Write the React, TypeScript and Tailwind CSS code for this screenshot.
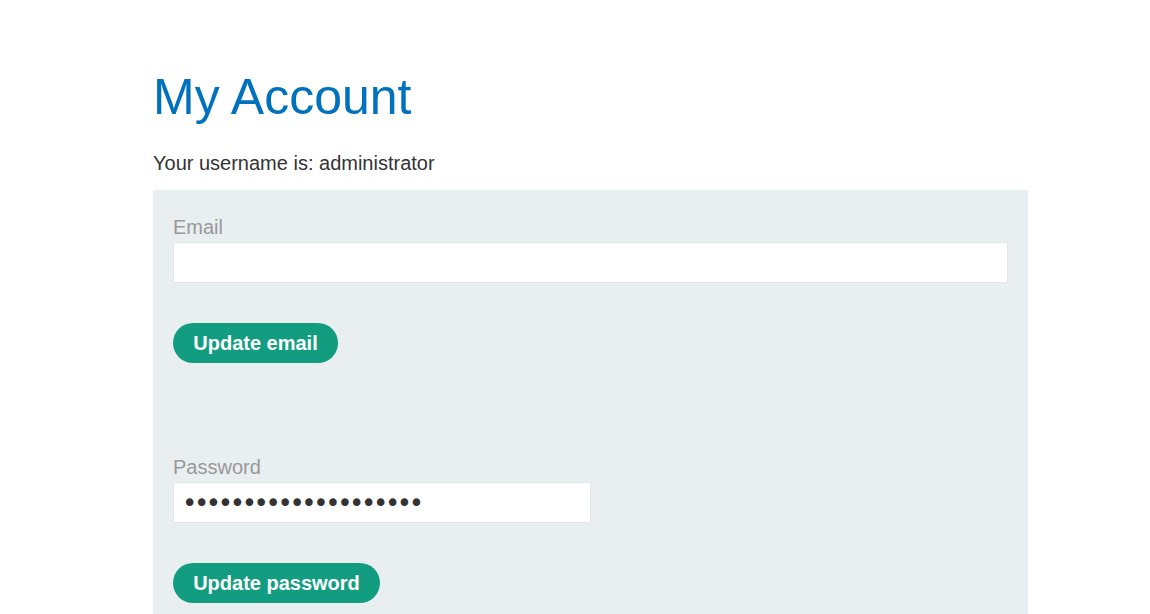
import React from 'react';

const font = { fontFamily: '"Liberation Sans", Arial, sans-serif' };

const AccountField: React.FC<{ label: string; type: string; value?: string; width: string; button: string; btnWidth: string; top: string; inputFont?: string }> = ({
    label, type, value, width, button, btnWidth, top, inputFont = 'px-[11px] text-[20px]',
}) => (
    <div className={`flex flex-col ${top}`}>
        <label className="block h-6 leading-6 text-[20px] text-[#999999] mb-[3px]">{label}</label>
        <input
            type={type}
            defaultValue={value}
            readOnly
            className={`${width} h-[41px] bg-white border border-[#e4e6e8] text-[#333333] outline-none ${inputFont}`}
        />
        <button className={`mt-10 h-10 ${btnWidth} rounded-full bg-[#139d80] text-white text-[20px] font-bold leading-10`}>
            {button}
        </button>
    </div>
);

export default function App() {
    return (
        <div className="min-h-[614px] bg-white overflow-hidden" style={font}>
            <div className="ml-[153px] w-[875px] pt-[67px]">
                <h1 className="text-[50px] leading-[60px] text-[#0071bc] font-normal">My Account</h1>
                <p className="mt-[24px] text-[20px] leading-6 text-[#333333]">Your username is: administrator</p>
                <div className="mt-[15px] bg-[#e9eef1] px-5 pt-[25px] pb-10">
                    <AccountField label="Email" type="email" width="w-full" button="Update email" btnWidth="w-[165px]" top="" />
                    <AccountField
                        label="Password"
                        type="password"
                        value="peter123peter123pete"
                        width="w-[418px]"
                        button="Update password"
                        btnWidth="w-[207px]"
                        top="mt-[92px]"
                        inputFont="pl-[8px] pr-2 font-['DejaVu_Sans'] text-[26px] tracking-[-3.4px]"
                    />
                </div>
            </div>
        </div>
    );
}
